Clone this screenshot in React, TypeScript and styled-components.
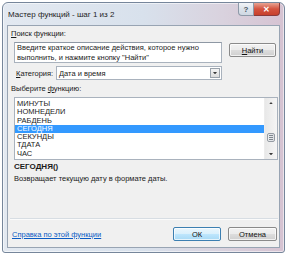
import React from "react";
import styled, { createGlobalStyle } from "styled-components";

const GlobalStyle = createGlobalStyle`
  body {
    margin: 0;
    background: #fff;
    font-family: "Liberation Sans", Arial, sans-serif;
    color: #1a1a1a;
  }
`;

const Page = styled.div`
  width: 287px;
  height: 258px;
  box-sizing: border-box;
  padding: 2px 2px 0 2px;
`;

const Window = styled.div`
  width: 283px;
  height: 251px;
  box-sizing: border-box;
  border: 1px solid #76869b;
  border-radius: 6px 6px 3px 3px;
  background: linear-gradient(
    90deg,
    #e3e9f1 0%,
    #d8e1ec 50%,
    #d9d2de 78%,
    #d6c3d2 100%
  );
  box-shadow: inset 0 0 0 1px rgba(255, 255, 255, 0.55);
  display: flex;
  flex-direction: column;
`;

const TitleBar = styled.div`
  height: 22px;
  display: flex;
  align-items: center;
  padding-left: 5px;
`;

const Title = styled.span`
  font-size: 8px;
  color: #1e1e1e;
`;

const CaptionButtons = styled.div`
  margin-left: auto;
  margin-right: 4px;
  align-self: flex-start;
  display: flex;
`;

const CaptionButton = styled.div<{ $close?: boolean }>`
  height: 13px;
  width: ${(p) => (p.$close ? "26px" : "16px")};
  box-sizing: border-box;
  display: flex;
  align-items: center;
  justify-content: center;
  border: 1px solid ${(p) => (p.$close ? "#8a3a3a" : "#8d99a8")};
  border-top: none;
  border-left-width: ${(p) => (p.$close ? "0" : "1px")};
  border-radius: ${(p) => (p.$close ? "0 0 4px 0" : "0 0 0 4px")};
  background: ${(p) =>
    p.$close
      ? "linear-gradient(#e8a493 0%, #d4533f 50%, #c7402c 100%)"
      : "linear-gradient(#f2f4f7 0%, #dbe2ea 50%, #cfd8e3 100%)"};
  color: ${(p) => (p.$close ? "#fff" : "#4a5462")};
  font-size: 8px;
  font-weight: bold;
`;

const Client = styled.div`
  flex: 1;
  margin: 0 4px 4px;
  border: 1px solid #98a4b3;
  background: #f0f0f0;
  display: flex;
  flex-direction: column;
  font-size: 7.5px;
`;

const Label = styled.div<{ $indent?: number }>`
  margin-left: ${(p) => p.$indent ?? 3}px;
  line-height: 9px;
  height: 9px;
  white-space: nowrap;
`;

const U = styled.span`
  text-decoration: underline;
`;

const SearchRow = styled.div`
  display: flex;
  align-items: flex-start;
  margin: 4px 0 0 6px;
`;

const TextArea = styled.div`
  width: 208px;
  height: 21px;
  box-sizing: border-box;
  border: 1px solid #a9b2bd;
  border-top-color: #8e98a4;
  background: #fff;
  padding: 0 2px;
  line-height: 10px;
  color: #222;
  white-space: nowrap;
`;

const Button = styled.div<{ $default?: boolean; $w: number }>`
  width: ${(p) => p.$w}px;
  height: 14px;
  box-sizing: border-box;
  border: 1px solid ${(p) => (p.$default ? "#3c7fb1" : "#8a8a8a")};
  border-radius: 2px;
  background: ${(p) =>
    p.$default
      ? "linear-gradient(#eaf6fd 0%, #d9f0fc 50%, #bee6fd 51%, #a7d9f5 100%)"
      : "linear-gradient(#f2f2f2 0%, #ebebeb 50%, #dddddd 51%, #cfcfcf 100%)"};
  box-shadow: inset 0 0 0 1px rgba(255, 255, 255, 0.7);
  display: flex;
  align-items: center;
  justify-content: center;
  font-size: 7.5px;
  color: #111;
`;

const FindButton = styled(Button)`
  margin: 1px 0 0 7px;
`;

const CategoryRow = styled.div`
  display: flex;
  align-items: center;
  margin: 3px 0 0 8px;
`;

const CategoryLabel = styled.div`
  width: 40px;
`;

const Select = styled.div`
  width: 166px;
  height: 14px;
  box-sizing: border-box;
  border: 1px solid #a9b2bd;
  background: #fff;
  display: flex;
  align-items: center;
  padding: 0 1px 0 2px;
`;

const SelectValue = styled.span`
  flex: 1;
`;

const ArrowBox = styled.div`
  width: 10px;
  height: 10px;
  box-sizing: border-box;
  border: 1px solid #9aa2ab;
  background: linear-gradient(#f4f4f4, #dcdcdc);
  display: flex;
  align-items: center;
  justify-content: center;
`;

const ListBox = styled.div`
  margin: 4px 0 0 6px;
  width: 264px;
  height: 63px;
  box-sizing: border-box;
  border: 1px solid #a9b2bd;
  background: #fff;
  display: flex;
`;

const Items = styled.div`
  flex: 1;
  padding-top: 2px;
`;

const Item = styled.div<{ $selected?: boolean }>`
  height: 8.3px;
  line-height: 8.3px;
  padding-left: 2px;
  background: ${(p) => (p.$selected ? "#3399ff" : "transparent")};
  color: ${(p) => (p.$selected ? "#fff" : "#1a1a1a")};
`;

const ScrollBar = styled.div`
  width: 12px;
  display: flex;
  flex-direction: column;
  align-items: center;
  background: linear-gradient(90deg, #e8e8e8, #f5f5f5);
  border-left: 1px solid #ececec;
`;

const ScrollArrow = styled.div`
  height: 10px;
  display: flex;
  align-items: center;
  justify-content: center;
`;

const Track = styled.div`
  flex: 1;
  width: 100%;
  display: flex;
  flex-direction: column;
  align-items: center;
  padding-top: 25px;
  box-sizing: border-box;
`;

const Thumb = styled.div`
  width: 8px;
  height: 9px;
  box-sizing: border-box;
  border: 1px solid #959ba3;
  border-radius: 2px;
  background: linear-gradient(90deg, #eceef0, #dcdfe3);
  display: flex;
  flex-direction: column;
  justify-content: center;
  align-items: center;
  gap: 1px;
`;

const Grip = styled.div`
  width: 4px;
  height: 1px;
  background: #7e858d;
`;

const FuncName = styled.div`
  margin: 2px 0 0 6px;
  font-weight: bold;
  font-size: 8px;
  line-height: 10px;
`;

const Description = styled.div`
  margin: 2px 0 0 6px;
  line-height: 9px;
`;

const Spacer = styled.div`
  flex: 1;
`;

const Separator = styled.div`
  margin: 0 1px 0 2px;
  height: 1px;
  background: #d7dde3;
  border-bottom: 1px solid #fbfbfb;
`;

const Footer = styled.div`
  display: flex;
  align-items: center;
  gap: 7px;
  padding: 7px 2px 6px 4px;
`;

const HelpLink = styled.a`
  color: #0a5bc4;
  text-decoration: underline;
  margin-right: auto;
  font-size: 7.5px;
`;

const Triangle = ({ up, size = 5 }: { up?: boolean; size?: number }) => (
  <svg width={size} height={size * 0.6} viewBox="0 0 5 3">
    <path d={up ? "M0 3 L2.5 0 L5 3 Z" : "M0 0 L5 0 L2.5 3 Z"} fill="#3a3a3a" />
  </svg>
);

const functions = ["МИНУТЫ", "НОМНЕДЕЛИ", "РАБДЕНЬ", "СЕГОДНЯ", "СЕКУНДЫ", "ТДАТА", "ЧАС"];

const App = () => (
  <Page>
    <GlobalStyle />
    <Window>
      <TitleBar>
        <Title>Мастер функций - шаг 1 из 2</Title>
        <CaptionButtons>
          <CaptionButton>?</CaptionButton>
          <CaptionButton $close>✕</CaptionButton>
        </CaptionButtons>
      </TitleBar>
      <Client>
        <Label style={{ marginTop: 3 }}>
          <U>П</U>оиск функции:
        </Label>
        <SearchRow>
          <TextArea>
            Введите краткое описание действия, которое нужно
            <br />
            выполнить, и нажмите кнопку "Найти"
          </TextArea>
          <FindButton $w={47}>
            <span>
              <U>Н</U>айти
            </span>
          </FindButton>
        </SearchRow>
        <CategoryRow>
          <CategoryLabel>
            <U>К</U>атегория:
          </CategoryLabel>
          <Select>
            <SelectValue>Дата и время</SelectValue>
            <ArrowBox>
              <Triangle size={4} />
            </ArrowBox>
          </Select>
        </CategoryRow>
        <Label style={{ marginTop: 4 }}>
          Выберите <U>ф</U>ункцию:
        </Label>
        <ListBox>
          <Items>
            {functions.map((f) => (
              <Item key={f} $selected={f === "СЕГОДНЯ"}>
                {f}
              </Item>
            ))}
          </Items>
          <ScrollBar>
            <ScrollArrow>
              <Triangle up size={4} />
            </ScrollArrow>
            <Track>
              <Thumb>
                <Grip />
                <Grip />
                <Grip />
              </Thumb>
            </Track>
            <ScrollArrow>
              <Triangle size={4} />
            </ScrollArrow>
          </ScrollBar>
        </ListBox>
        <FuncName>СЕГОДНЯ()</FuncName>
        <Description>Возвращает текущую дату в формате даты.</Description>
        <Spacer />
        <Separator />
        <Footer>
          <HelpLink href="#">Справка по этой функции</HelpLink>
          <Button $default $w={48}>
            ОК
          </Button>
          <Button $w={49}>Отмена</Button>
        </Footer>
      </Client>
    </Window>
  </Page>
);

export default App;
